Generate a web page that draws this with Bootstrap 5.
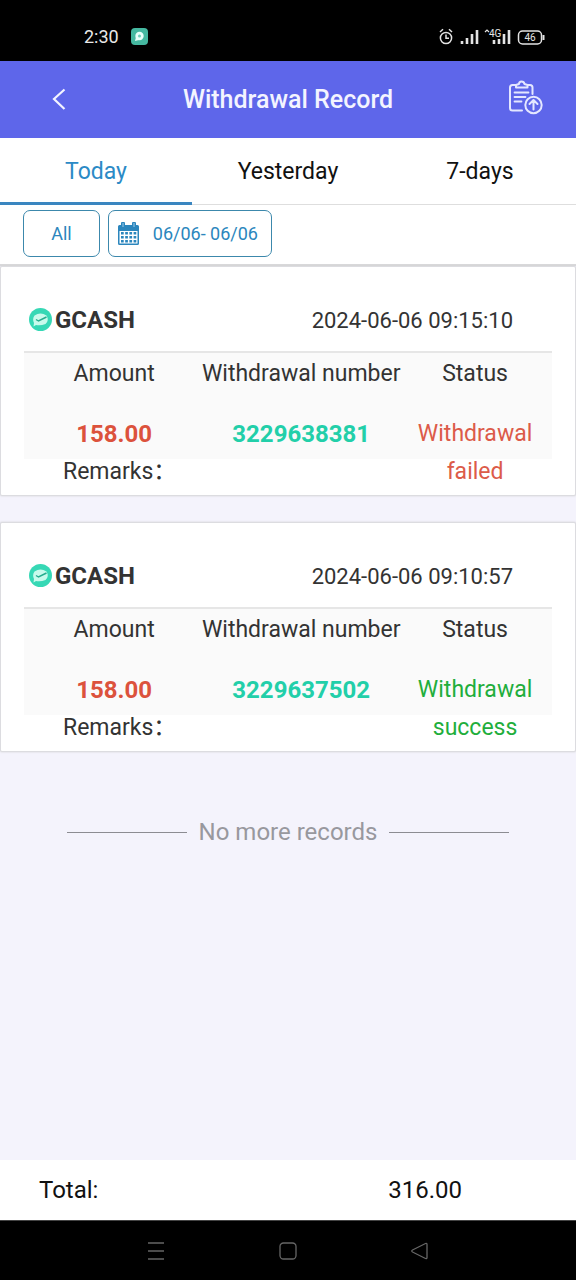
<!DOCTYPE html>
<html lang="en">
<head>
<meta charset="utf-8">
<meta name="viewport" content="width=device-width, initial-scale=1">
<title>Withdrawal Record</title>
<link href="https://cdn.jsdelivr.net/npm/bootstrap@5.3.0/dist/css/bootstrap.min.css" rel="stylesheet">
<style>
  body { font-family: Roboto, "Noto Sans CJK SC", sans-serif; font-size: 23px; color: #333; background: #f4f3fc; }
  svg { display: block; flex: none; }
  button { color: inherit; }
  .device-bar { height: 61px; background: #000; color: #e8e8e8; font-size: 18px; padding: 12px 31px 0 84px; }
  .app-bar { height: 77px; background: #5e66ea; color: #f3f4ff; padding: 0 32px; }
  .app-bar h1 { font-size: 25px; font-weight: 500; }
  .app-bar .btn { width: 52px; }
  .period-tabs { height: 67px; border-bottom: 1px solid #dedede; }
  .period-tabs .nav-link { color: #111; border-bottom: 3px solid transparent; border-radius: 0; padding: 4px 0 0; line-height: 59px; margin-bottom: -1px; }
  .period-tabs .nav-link.active { color: #2b8ac6; border-color: #3a86c0; }
  .filters { height: 61px; padding: 5px 23px 0; gap: 8px; border-bottom: 2px solid #d9d9db; }
  .filter-btn { height: 47px; border: 1px solid #3c88ac; border-radius: 7px; color: #2b86bd; font-size: 18px; line-height: 24px; }
  .filter-all { width: 77px; }
  .filter-date { width: 164px; padding: 0 9px; }
  .record { border: 1px solid #dcdce0; border-radius: 2px; box-shadow: 0 0 2px #ccc; padding: 0 23px 4px; }
  .record + .record { margin-top: 26px; }
  .record-head { height: 86px; padding: 22px 0 0 5px; border-bottom: 2px solid #e6e6e6; }
  .record-head h2 { font-size: 24px; font-weight: 700; }
  .record-head svg { margin-right: 3px; }
  .record-date { font-size: 22px; margin-right: 39px; }
  .record-table { --bs-table-bg: transparent; --bs-table-color: #333; color: #333; line-height: 38px;
    background: linear-gradient(#fafafa, #fafafa) 0 0 / 100% 106px no-repeat; }
  .record-table th { padding: 2px 0 0; }
  .record-table .values > td { padding: 22px 0 0; }
  .record-table th:first-child, .record-table .values > td:first-child { padding-left: 6px; }
  .record-table th:last-child, .record-table .values > td:last-child { padding-right: 6px; }
  .col-amount { width: 33%; }
  .col-number { width: 39%; }
  .record-table .amount { color: #dc523c; font-size: 24px; }
  .record-table .number { color: #22cfa9; font-size: 24px; }
  .record-table .failed { color: #dc5b49; }
  .record-table .success { color: #1fae3c; }
  .record-table .remarks { padding: 0 0 0 39px; }
  .end-note { color: #98989e; font-size: 24px; gap: 12px; padding: 62px 67px; }
  .end-note hr { border-color: #8c8c92; opacity: 1; }
  .total-bar { height: 60px; color: #111; font-size: 24px; padding: 0 114px 0 39px; }
  .key-bar { height: 60px; background: #000; border-top: 1px solid #444; color: #666; padding: 0 146px; }
</style>
</head>
<body>
<div class="d-flex flex-column min-vh-100">
  <div class="device-bar d-flex align-items-center">
    <span class="me-2">2:30</span>
    <svg class="ms-1" width="17" height="17" viewBox="0 0 17 17"><rect width="17" height="17" rx="4" fill="#45b8a0"/><circle cx="8.5" cy="8" r="4.2" fill="#eafffa"/><path d="M5 9l-1 4 4-1z" fill="#eafffa"/><circle cx="8.5" cy="8" r="1.5" fill="#70cdb9"/></svg>
    <svg class="ms-auto" width="106" height="20" viewBox="0 0 106 20" fill="none" stroke="#e4e4e4" stroke-width="1.5">
      <circle cx="7" cy="11" r="5.6"/><path d="M7 7.500v3.800h3M1 5l3-2.800M13 5l-3-2.800"/>
      <path d="M23 17v-3M28 17v-6M33 17V7M38 17V3M55 17v-4M60 17v-5M65 17V7M70 17V3" stroke-width="2.600"/>
      <path d="M46 5l2-2 2 2" stroke-width="1.200"/>
      <text x="50" y="10" font-family="Roboto, sans-serif" font-size="10" fill="#e4e4e4" stroke="none">4G</text>
      <rect x="79.500" y="4" width="23" height="13" rx="4"/><path d="M104.500 8v5" stroke-width="2"/>
      <text x="91" y="14" text-anchor="middle" font-family="Roboto, sans-serif" font-size="10" fill="#e4e4e4" stroke="none">46</text>
    </svg>
  </div>

  <header class="app-bar d-flex align-items-center justify-content-between">
    <button class="btn p-0 border-0" type="button" aria-label="Back">
      <svg width="52" height="24" viewBox="0 0 52 24" fill="none" stroke="#f3f4ff" stroke-width="2.200"><path d="M32.500 1.500L22 11l10.500 10"/></svg>
    </button>
    <h1 class="m-0 text-nowrap">Withdrawal Record</h1>
    <button class="btn p-0 border-0" type="button" aria-label="Submit record">
      <svg class="mb-1 ms-auto" width="36" height="36" viewBox="0 0 36 36" fill="none" stroke="#e4e7ff" stroke-width="2" stroke-linecap="round" stroke-linejoin="round">
        <path d="M8 5H4.500Q2 5 2 7.500V28q0 2.500 2.500 2.500H14M20 5h2q2.500 0 2.500 2.500V14"/>
        <path d="M8 7.500V5l3-1q0-2.500 2.500-2.500T16.500 4l3 1v2.500z"/>
        <path d="M6.500 12.500h14M6.500 17h11M6.500 21.500h7" stroke-width="1.800"/>
        <circle cx="25.500" cy="25" r="8.200"/><path d="M25.500 29.500v-9M21.500 24l4-4 4 4"/>
      </svg>
    </button>
  </header>

  <nav class="period-tabs nav nav-fill flex-nowrap bg-white">
    <a class="nav-link col-4 active" aria-current="page" href="#">Today</a>
    <a class="nav-link col-4" href="#">Yesterday</a>
    <a class="nav-link col-4" href="#">7-days</a>
  </nav>

  <div class="filters d-flex align-items-start bg-white">
    <button class="btn filter-btn filter-all p-0" type="button">All</button>
    <button class="btn filter-btn filter-date d-flex align-items-center justify-content-between" type="button">
      <svg width="21" height="24" viewBox="0 0 21 24">
        <path fill="#2b86bd" fill-rule="evenodd" d="M1.500 3H3V1.500a1.500 1.500 0 0 1 4 0V3h7V1.500a1.500 1.500 0 0 1 4 0V3h1.500Q21 3 21 4.500v17q0 1.500-1.500 1.500h-18Q0 23 0 21.500v-17Q0 3 1.500 3zM1.500 9v12.500h18V9z"/>
        <path d="M5 1v4M16 1v4" stroke="#9dcbea" stroke-width="1"/>
        <path d="M3 11.200h15.500M3 15.200h15.500M3 19.200h15.500" stroke="#2b86bd" stroke-width="2.600" stroke-dasharray="2.700 1.500"/>
      </svg>
      <span class="text-nowrap me-1">06/06- 06/06</span>
    </button>
  </div>

  <main class="flex-grow-1">
    <article class="record bg-white">
      <div class="record-head d-flex align-items-center justify-content-between">
        <div class="d-flex align-items-center">
          <svg width="23" height="23" viewBox="0 0 23 23"><circle cx="11.500" cy="11.500" r="11.500" fill="#36d8b5"/><path d="M5.500 7.500q6-4 12 0 3 5-1 8.500-5 2-9.500 1l-2.500 1.500.5-3.500q-2-4 .5-7.500z" fill="#c9faec"/><path d="M7 11.500l2.500 1.500 8-4" fill="none" stroke="#25ab8d" stroke-width="1.400"/></svg>
          <h2 class="m-0">GCASH</h2>
        </div>
        <time class="record-date" datetime="2024-06-06T09:15:10">2024-06-06 09:15:10</time>
      </div>
      <table class="table table-borderless record-table text-center align-top m-0">
        <thead><tr><th class="col-amount fw-normal">Amount</th><th class="col-number fw-normal text-nowrap">Withdrawal number</th><th class="fw-normal">Status</th></tr></thead>
        <tbody>
          <tr class="values"><td class="amount fw-bold">158.00</td><td class="number fw-bold">3229638381</td><td class="failed" rowspan="2">Withdrawal failed</td></tr>
          <tr><td class="remarks text-start" colspan="2">Remarks：</td></tr>
        </tbody>
      </table>
    </article>

    <article class="record bg-white">
      <div class="record-head d-flex align-items-center justify-content-between">
        <div class="d-flex align-items-center">
          <svg width="23" height="23" viewBox="0 0 23 23"><circle cx="11.500" cy="11.500" r="11.500" fill="#36d8b5"/><path d="M5.500 7.500q6-4 12 0 3 5-1 8.500-5 2-9.500 1l-2.500 1.500.5-3.500q-2-4 .5-7.500z" fill="#c9faec"/><path d="M7 11.500l2.500 1.500 8-4" fill="none" stroke="#25ab8d" stroke-width="1.400"/></svg>
          <h2 class="m-0">GCASH</h2>
        </div>
        <time class="record-date" datetime="2024-06-06T09:10:57">2024-06-06 09:10:57</time>
      </div>
      <table class="table table-borderless record-table text-center align-top m-0">
        <thead><tr><th class="col-amount fw-normal">Amount</th><th class="col-number fw-normal text-nowrap">Withdrawal number</th><th class="fw-normal">Status</th></tr></thead>
        <tbody>
          <tr class="values"><td class="amount fw-bold">158.00</td><td class="number fw-bold">3229637502</td><td class="success" rowspan="2">Withdrawal success</td></tr>
          <tr><td class="remarks text-start" colspan="2">Remarks：</td></tr>
        </tbody>
      </table>
    </article>

    <div class="end-note d-flex align-items-center">
      <hr class="flex-grow-1 m-0"><span>No more records</span><hr class="flex-grow-1 m-0">
    </div>
  </main>

  <footer>
    <div class="total-bar d-flex align-items-center justify-content-between bg-white">
      <span>Total:</span><span>316.00</span>
    </div>
    <div class="key-bar d-flex align-items-center justify-content-between">
      <button class="btn p-0 border-0" type="button" aria-label="Recent apps"><svg width="20" height="20" viewBox="0 0 20 20" fill="none" stroke="#666" stroke-width="1.300"><path d="M2 2h16M2 10h16M2 18h16"/></svg></button>
      <button class="btn p-0 border-0" type="button" aria-label="Home"><svg width="20" height="20" viewBox="0 0 20 20" fill="none" stroke="#666" stroke-width="1.300"><rect x="2" y="2" width="16" height="16" rx="3.500"/></svg></button>
      <button class="btn p-0 border-0" type="button" aria-label="Back to previous screen"><svg width="20" height="20" viewBox="0 0 20 20" fill="none" stroke="#666" stroke-width="1.300" stroke-linejoin="round"><path d="M15.500 2.500L2.500 9q-1.500 1 0 2l13 6.500q1.500.5 1.500-1v-13q0-1.500-1.500-1z"/></svg></button>
    </div>
  </footer>
</div>
<script src="https://cdn.jsdelivr.net/npm/bootstrap@5.3.0/dist/js/bootstrap.bundle.min.js"></script>
</body>
</html>
